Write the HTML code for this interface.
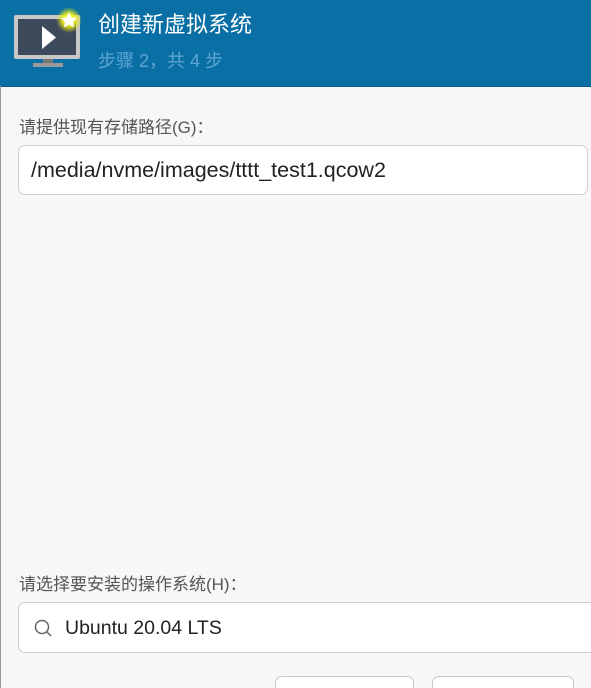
<!DOCTYPE html>
<html style="overflow:hidden"><head><meta charset="utf-8"><style>
body{margin:0;width:591px;height:688px;overflow:hidden;background:#f7f7f7;font-family:"Liberation Sans","Noto Sans CJK SC",sans-serif;position:relative}
.hdr{position:absolute;left:0;top:0;width:591px;height:86px;background:#0a6fa5;border-bottom:1px solid #0a5a85}
.t1{position:absolute;left:98px;top:7px;color:#fff;font-size:22px}
.t2{position:absolute;left:98px;top:47px;color:#5fa6d2;font-size:18px}
.lb{position:absolute;left:19px;color:#555;font-size:17px}
.en{position:absolute;background:#fff;border:1px solid #cfcfcf;border-radius:7px;box-sizing:border-box;font-size:19px;color:#222}
.btn{position:absolute;top:676px;height:14px;background:#fff;border:1px solid #c8c8c8;border-bottom:none;border-radius:7px 7px 0 0}
.lline{position:absolute;left:0;top:86px;width:1px;height:602px;background:#999}
</style></head><body>
<div class="hdr">
<svg style="position:absolute;left:10px;top:6px" width="75" height="64" viewBox="0 0 75 64">
<defs><radialGradient id="g"><stop offset="0" stop-color="#ffff60"/><stop offset="0.5" stop-color="#f0f020" stop-opacity=".9"/><stop offset="1" stop-color="#e0e000" stop-opacity="0"/></radialGradient></defs>
<rect x="4" y="9" width="66" height="44" rx="2" fill="#c8c8c8"/>
<rect x="8" y="13" width="58" height="36" fill="#3d4a5c"/>
<polygon points="32,20 32,43 46,31.5" fill="#fff"/>
<rect x="33" y="53" width="10" height="4" fill="#777"/>
<rect x="23" y="57" width="30" height="4" fill="#999"/>
<circle cx="59" cy="14" r="13" fill="url(#g)"/>
<polygon points="59,6 61.5,11.5 67,12 63,16 64,21.5 59,18.5 54,21.5 55,16 51,12 56.5,11.5" fill="#fff"/>
</svg>
<div class="t1">创建新虚拟系统</div>
<div class="t2">步骤 2，共 4 步</div>
</div>
<div class="lline"></div>
<div class="lb" style="top:113px">请提供现有存储路径(G)：</div>
<div class="en" style="left:18px;top:145px;width:570px;height:50px;padding:12px 0 0 12px;font-size:21.5px">/media/nvme/images/tttt_test1.qcow2</div>
<div class="lb" style="top:570px">请选择要安装的操作系统(H)：</div>
<div class="en" style="left:18px;top:602px;width:590px;height:51px;padding:14px 0 0 46px;font-size:19.5px">
<svg style="position:absolute;left:14px;top:15px" width="22" height="22" viewBox="0 0 22 22"><circle cx="9" cy="9" r="6.5" fill="none" stroke="#666" stroke-width="1.5"/><line x1="13.5" y1="13.5" x2="18" y2="18" stroke="#666" stroke-width="1.5"/></svg>Ubuntu 20.04 LTS</div>
<div class="btn" style="left:275px;width:137px"></div>
<div class="btn" style="left:432px;width:140px"></div>
</body></html>
